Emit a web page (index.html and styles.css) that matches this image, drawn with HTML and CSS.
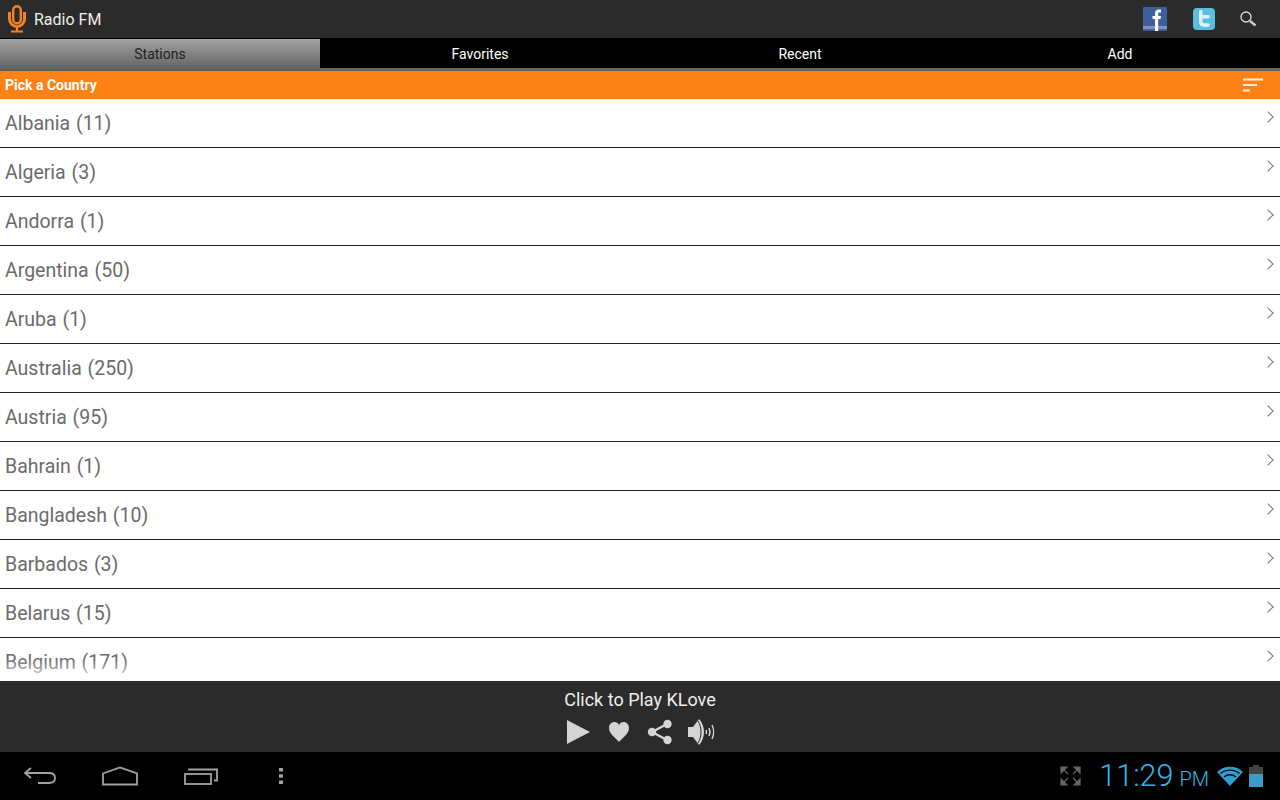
FILE: index.html
```html
<!DOCTYPE html>
<html>
    <head>
        <meta charset="UTF-8">
        <title>Radio FM</title>
        <link rel="stylesheet" href="styles.css">
    </head>
    <body>
        <header class="actionBar">
            <svg class="appIcon" width="20" height="28" viewBox="0 0 20 28">
                <rect x="6.200" y="1.200" width="7.600" height="17" rx="3.800" fill="none" stroke="#f58220" stroke-width="2.400"/>
                <path d="M2.500 7v7a7.500 7.500 0 0 0 15 0V7" fill="none" stroke="#f58220" stroke-width="3"/>
                <path d="M10 21v5M4 26.500h12" fill="none" stroke="#f58220" stroke-width="2.200"/>
            </svg>
            <span class="appTitle">Radio FM</span>
            <div class="actions">
                <svg class="facebook" width="24" height="24" viewBox="0 0 24 24">
                    <rect width="24" height="24" rx="1" fill="#3f5e9c"/>
                    <rect y="19" width="24" height="3" fill="#7f93bd"/>
                    <path d="M12 24V12H9.500V9H12V6.500C12 3.800 13.500 2.500 16 2.500H18V5.500H16.500C15.500 5.500 15.200 6 15.200 7V9H18L17.500 12H15.200V24Z" fill="#fff"/>
                </svg>
                <svg class="twitter" width="22" height="22" viewBox="0 0 22 22">
                    <rect width="22" height="22" rx="4" fill="#5bbde0"/>
                    <path d="M6 3.500a1.800 1.800 0 0 1 3.600 0V7H15a1.800 1.800 0 0 1 0 3.600H9.600V13c0 1.500.8 2.300 2.200 2.300H15a1.800 1.800 0 0 1 0 3.600h-3.500C8 18.900 6 17 6 13.500Z" fill="#d9f2fa"/>
                </svg>
                <svg class="search" width="18" height="18" viewBox="0 0 18 18">
                    <circle cx="7" cy="7" r="5" fill="none" stroke="#ddd" stroke-width="1.300"/>
                    <path d="M11 11l5.500 4.500" fill="none" stroke="#ccc" stroke-width="2.400"/>
                </svg>
            </div>
        </header>
        <nav class="tabs">
            <div class="tab tabActive">Stations</div>
            <div class="tab">Favorites</div>
            <div class="tab">Recent</div>
            <div class="tab">Add</div>
        </nav>
        <div class="sectionBar">
            <span>Pick a Country</span>
            <svg width="20" height="14" viewBox="0 0 20 14">
                <path d="M0 1.500h20M0 7h14M0 12.500h7" fill="none" stroke="#fff0dd" stroke-width="2"/>
            </svg>
        </div>
        <main class="countryList">
            <ul>
                <li>Albania (11)</li>
                <li>Algeria (3)</li>
                <li>Andorra (1)</li>
                <li>Argentina (50)</li>
                <li>Aruba (1)</li>
                <li>Australia (250)</li>
                <li>Austria (95)</li>
                <li>Bahrain (1)</li>
                <li>Bangladesh (10)</li>
                <li>Barbados (3)</li>
                <li>Belarus (15)</li>
                <li>Belgium (171)</li>
            </ul>
            <div class="listFade"></div>
        </main>
        <footer class="player">
            <div class="playerTitle">Click to Play KLove</div>
            <div class="playerControls">
                <svg class="playIcon" width="24" height="26" viewBox="0 0 24 26">
                    <path d="M1 1l23 12L1 25Z" fill="#d4d4d4"/>
                </svg>
                <svg class="heartIcon" width="20" height="20" viewBox="0 0 20 20">
                    <path d="M10 20C6 15.500 0 11.500 0 6 0 2.500 2.500 0 5.500 0 7.500 0 9.200 1 10 3 10.800 1 12.500 0 14.500 0 17.500 0 20 2.500 20 6 20 11.500 14 15.500 10 20Z" fill="#d4d4d4"/>
                </svg>
                <svg class="shareIcon" width="26" height="26" viewBox="0 0 26 26">
                    <path d="M5 13L20 5M5 13l15 8" fill="none" stroke="#d4d4d4" stroke-width="2.400"/>
                    <circle cx="5" cy="13" r="4.200" fill="#d4d4d4"/>
                    <circle cx="20.500" cy="5" r="4.200" fill="#d4d4d4"/>
                    <circle cx="20.500" cy="21" r="4.200" fill="#d4d4d4"/>
                </svg>
                <svg class="speakerIcon" width="27" height="28" viewBox="0 0 27 28">
                    <path d="M0 9h5l6-8c3 3 5 8 5 13s-2 10-5 13l-6-8H0Z" fill="#d4d4d4"/>
                    <path d="M10 3c2 3 3 7 3 11s-1 8-3 11" fill="none" stroke="#2b2b2b" stroke-width="1"/>
                    <path d="M18 12c.7 1.300.7 2.700 0 4M21 10c1.200 2.500 1.200 5.500 0 8M24 7c2 4 2 10 0 14" fill="none" stroke="#d4d4d4" stroke-width="1.500"/>
                </svg>
            </div>
        </footer>
        <div class="systemBar">
            <div class="navButtons">
                <svg class="navBack" width="34" height="20" viewBox="0 0 34 20">
                    <path d="M8 2L2 7l6 5M2 7h24c4 0 6 2 6 5s-2 5-6 5H15" fill="none" stroke="#a3a3a3" stroke-width="1.800"/>
                </svg>
                <svg class="navHome" width="36" height="20" viewBox="0 0 36 20">
                    <path d="M1 7.500L18 1.500l17 6v11H1Z" fill="none" stroke="#a3a3a3" stroke-width="1.800"/>
                </svg>
                <svg class="navRecent" width="34" height="20" viewBox="0 0 34 20">
                    <rect x="1" y="8" width="26" height="10" fill="none" stroke="#a3a3a3" stroke-width="1.800"/>
                    <path d="M5 4.500V3.500h28v11h-3" fill="none" stroke="#a3a3a3" stroke-width="1.800"/>
                </svg>
                <svg class="navMenu" width="6" height="18" viewBox="0 0 6 18">
                    <path d="M1 1h4v3.500H1ZM1 7.200h4v3.500H1ZM1 13.500h4V17H1Z" fill="#a3a3a3"/>
                </svg>
            </div>
            <div class="statusArea">
                <svg width="21" height="20" viewBox="0 0 21 20">
                    <path d="M1 1h6L1 7ZM20 1h-6l6 6ZM1 19h6l-6-6ZM20 19h-6l6-6ZM4 4l4 4M17 4l-4 4M4 16l4-4M17 16l-4-4" fill="#666" stroke="#666" stroke-width="1.200"/>
                </svg>
                <div class="clock">11:29<span class="clockSuffix">PM</span></div>
                <svg width="26" height="20" viewBox="0 0 26 20">
                    <path d="M13 20L0 6c7-7 19-7 26 0Z" fill="#2f9fd0"/>
                    <path d="M3.500 7.500c5-4.500 14-4.500 19 0M7 11c3.500-3 8.500-3 12 0" fill="none" stroke="#000" stroke-width="1.300"/>
                </svg>
                <svg class="batteryIcon" width="14" height="22" viewBox="0 0 14 22">
                    <path d="M4 0h6v2h4v7H0V2h4Z" fill="#444"/>
                    <rect y="9" width="14" height="13" fill="#3a9bc9"/>
                </svg>
            </div>
        </div>
    </body>
</html>
```

FILE: styles.css
```css
:root {
    --bar-color: #2b2b2b;
    --orange: #fc8216;
    --row-text: #6b6b6b;
    --clock-blue: #33b5e5;
}

* {
    box-sizing: border-box;
}

html, body {
    height: 100%;
}

body {
    margin: 0;
    height: 800px;
    overflow: hidden;
    display: flex;
    flex-direction: column;
    font-family: Roboto, "Liberation Sans", sans-serif;
    background-color: #fff;
}

.actionBar {
    height: 39px;
    flex: none;
    display: flex;
    align-items: center;
    padding-left: 7px;
    background-color: var(--bar-color);
    border-bottom: 1px solid #000;
}

.appTitle {
    margin-left: 7px;
    color: #eee;
    font-size: 16px;
}

.actions {
    margin-left: auto;
    margin-right: 23px;
    display: flex;
    align-items: center;
    gap: 26px;
}

.search {
    margin-left: -2px;
}

.tabs {
    height: 32px;
    flex: none;
    display: grid;
    grid-template-columns: repeat(4, 1fr);
    background-color: #000;
    border-bottom: 3px solid #666;
}

.tab {
    height: 29px;
    line-height: 30px;
    text-align: center;
    color: #fff;
    font-size: 14px;
}

.tabActive {
    height: 32px;
    color: #222;
    background: linear-gradient(#a3a3a3, #5e5e5e);
}

.sectionBar {
    height: 28px;
    flex: none;
    display: flex;
    align-items: center;
    justify-content: space-between;
    padding: 0 17px 0 5px;
    background-color: var(--orange);
    color: #fff;
    font-size: 14px;
    font-weight: 700;
}

.countryList {
    flex: 1;
    min-height: 0;
    overflow: hidden;
    position: relative;
}

.countryList ul {
    margin: 0;
    padding: 0;
    list-style: none;
}

.countryList li {
    height: 49px;
    padding: 13px 0 0 5px;
    color: var(--row-text);
    font-size: 19.5px;
    word-spacing: 1px;
    line-height: 24px;
    border-bottom: 1px solid #222;
    position: relative;
}

.countryList li::after {
    content: "";
    position: absolute;
    top: 14px;
    right: 8px;
    width: 7px;
    height: 7px;
    border-top: 1.5px solid #777;
    border-right: 1.5px solid #777;
    transform: rotate(45deg);
}

.listFade {
    position: absolute;
    left: 0;
    right: 0;
    bottom: 0;
    height: 22px;
    background: linear-gradient(rgba(255, 255, 255, 0), rgba(255, 255, 255, .9));
}

.player {
    height: 71px;
    flex: none;
    background-color: var(--bar-color);
    text-align: center;
    padding-top: 8px;
}

.playerTitle {
    color: #eee;
    font-size: 18px;
    line-height: 22px;
}

.playerControls {
    display: flex;
    justify-content: center;
    align-items: center;
    height: 30px;
    margin-top: 6px;
}

.heartIcon {
    margin-left: 19px;
}

.shareIcon {
    margin-left: 18px;
}

.speakerIcon {
    margin-left: 15px;
}

.systemBar {
    height: 48px;
    flex: none;
    display: flex;
    align-items: center;
    justify-content: space-between;
    background-color: #000;
}

.navButtons {
    display: flex;
    align-items: center;
    padding-left: 23px;
}

.navHome {
    margin-left: 45px;
}

.navRecent {
    margin-left: 46px;
}

.navMenu {
    margin-left: 60px;
}

.statusArea {
    display: flex;
    align-items: center;
    padding-right: 17px;
}

.clock {
    margin: 0 8px 0 18px;
    padding-top: 3px;
    color: var(--clock-blue);
    font-size: 30.5px;
    font-weight: 300;
    line-height: 36px;
}

.clockSuffix {
    margin-left: 6px;
    font-size: 20px;
}

.batteryIcon {
    margin-left: 6px;
}
```
